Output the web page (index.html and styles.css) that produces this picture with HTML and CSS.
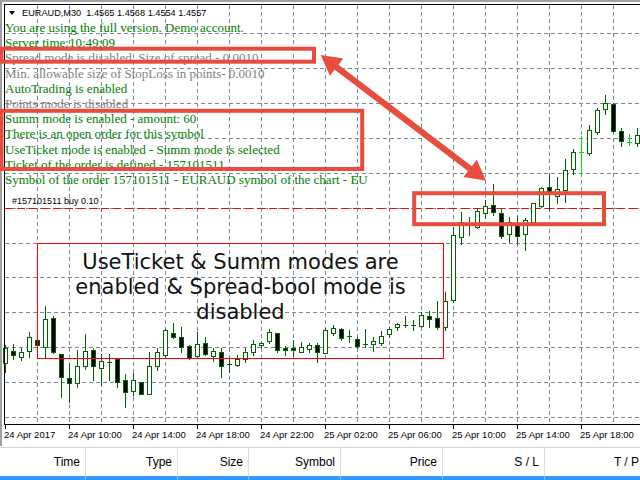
FILE: index.html
```html
<!DOCTYPE html>
<html lang="en">
<head>
    <meta charset="UTF-8">
    <title>EURAUD,M30</title>
    <link rel="stylesheet" href="styles.css">
</head>
<body>
    <div class="chart-window">
        <svg class="chart" width="638" height="427" viewBox="2 2 638 427">
            <g id="grid" class="grid"></g>
            <line class="order-line" x1="5" y1="208.5" x2="640" y2="208.5"/>
            <g id="candles"></g>
            <g class="frame">
                <line x1="4" y1="4.5" x2="640" y2="4.5"/>
                <line x1="4.5" y1="4" x2="4.5" y2="425"/>
                <line x1="4" y1="424.5" x2="640" y2="424.5"/>
            </g>
            <g id="ticks" class="frame"></g>
        </svg>

        <div class="info">
            <div class="chart-title"><span class="caret"></span>EURAUD,M30&nbsp; 1.4565 1.4568 1.4554 1.4557</div>
            <div class="msg on">You are using the full version. Demo account.</div>
            <div class="msg on">Server time:10:49:09</div>
            <div class="msg off">Spread mode is disabled. Size of spread - 0.0010</div>
            <div class="msg off">Min. allowable size of StopLoss in points- 0.0010</div>
            <div class="msg on">AutoTrading is enabled</div>
            <div class="msg off">Points mode is disabled</div>
            <div class="msg on">Summ mode is enabled - amount: 60</div>
            <div class="msg on">There is an open order for this symbol</div>
            <div class="msg on">UseTicket mode is enabled - Summ mode is selected</div>
            <div class="msg on">Ticket of the order is defined - 157101511</div>
            <div class="msg on">Symbol of the order 157101511 - EURAUD symbol of the chart - EU</div>
        </div>

        <div class="order-label">#157101511 buy 0.10</div>

        <div class="note">
            <p>UseTicket &amp; Summ modes are enabled &amp; Spread-bool mode is disabled</p>
        </div>

        <div class="time-axis">
            <span>24 Apr 2017</span>
            <span>24 Apr 10:00</span>
            <span>24 Apr 14:00</span>
            <span>24 Apr 18:00</span>
            <span>24 Apr 22:00</span>
            <span>25 Apr 02:00</span>
            <span>25 Apr 06:00</span>
            <span>25 Apr 10:00</span>
            <span>25 Apr 14:00</span>
            <span>25 Apr 18:00</span>
        </div>
    </div>

    <div class="orders">
        <div class="orders-head">
            <div class="col c-time">Time</div>
            <div class="col c-type">Type</div>
            <div class="col c-size">Size</div>
            <div class="col c-symbol">Symbol</div>
            <div class="col c-price">Price</div>
            <div class="col c-sl">S / L</div>
            <div class="col c-tp">T / P</div>
        </div>
        <div class="orders-row">
            <div class="col c-time"></div>
            <div class="col c-type"></div>
            <div class="col c-size"></div>
            <div class="col c-symbol"></div>
            <div class="col c-price"></div>
            <div class="col c-sl"></div>
            <div class="col c-tp"></div>
        </div>
    </div>

    <!-- marcas de la captura -->
    <svg class="markup" width="640" height="480" viewBox="0 0 640 480">
        <rect x="1.5" y="48.7" width="312.5" height="13"/>
        <rect x="1.5" y="110.8" width="360.7" height="58.2"/>
        <rect x="414.2" y="193.2" width="189.8" height="31"/>
        <line x1="335" y1="66" x2="471" y2="169.5"/>
        <polygon points="320.7,55 343.3,58.4 329.9,75.8"/>
        <polygon points="486,180.5 463.4,177.1 476.8,159.7"/>
    </svg>

    <script>
        const NS = 'http://www.w3.org/2000/svg';

        function add(parent, tag, attrs) {
            const el = document.createElementNS(NS, tag);
            for (const k in attrs) el.setAttribute(k, attrs[k]);
            parent.appendChild(el);
            return el;
        }

        // Rejilla
        const grid = document.getElementById('grid');
        for (let x = 37; x < 640; x += 32) {
            add(grid, 'line', { x1: x + 0.5, y1: 5, x2: x + 0.5, y2: 424 });
        }
        [33, 68, 103, 138, 173, 208, 243, 277, 312, 347, 382, 417].forEach(y => {
            add(grid, 'line', { x1: 5, y1: y + 0.5, x2: 640, y2: y + 0.5 });
        });

        // Marcas del eje de tiempo
        const ticks = document.getElementById('ticks');
        for (let x = 5; x < 640; x += 64) {
            add(ticks, 'line', { x1: x + 0.5, y1: 424, x2: x + 0.5, y2: 429 });
        }

        // Velas M30: [max, cuerpo arriba, cuerpo abajo, min, tipo] en pixeles
        const bars = [
            [345,348,363,372,'u'], [344,351,355,359,'d'], [348,352,357,360,'u'], [332,337,351,357,'u'],
            [338,340,345,347,'d'], [306,319,347,357,'u'], [316,318,352,353,'d'], [354,354,377,397,'d'],
            [364,378,383,402,'d'], [350,366,383,387,'u'], [334,351,366,369,'u'], [348,350,366,380,'d'],
            [354,361,368,385,'u'], [354,362,363,380,'u'], [359,359,382,387,'d'], [374,380,392,407,'d'],
            [373,380,391,395,'u'], [382,382,394,394,'d'], [352,366,394,394,'u'], [348,352,366,370,'u'],
            [329,330,355,357,'u'], [323,333,337,338,'d'], [327,337,347,352,'d'], [345,346,358,359,'d'],
            [332,344,356,358,'u'], [337,343,354,355,'d'], [348,351,356,361,'u'], [348,352,366,377,'d'],
            [357,364,365,372,'d'], [355,359,365,366,'u'], [348,352,359,362,'u'], [340,344,352,355,'u'],
            [342,343,345,347,'u'], [329,332,341,343,'u'], [333,333,350,352,'d'], [346,348,350,355,'d'],
            [340,348,350,356,'d'], [342,347,352,352,'u'], [343,345,349,352,'u'], [343,345,352,362,'d'],
            [328,330,353,353,'u'], [325,328,333,335,'u'], [328,329,338,340,'d'], [330,336,337,342,'d'],
            [337,339,346,348,'d'], [329,344,345,347,'d'], [337,341,344,351,'u'], [331,336,343,345,'u'],
            [327,329,334,337,'u'], [323,324,327,330,'u'], [316,325,326,327,'d'], [320,325,326,330,'d'],
            [312,315,326,327,'u'], [311,316,319,327,'d'], [301,318,327,329,'d'], [292,301,327,330,'u'],
            [227,235,300,302,'u'], [212,222,237,244,'u'], [217,223,224,235,'u'], [209,211,227,228,'u'],
            [200,206,213,218,'u'], [184,205,212,215,'d'], [208,213,236,238,'d'], [217,222,234,242,'u'],
            [216,223,236,244,'d'], [218,220,234,250,'u'], [203,203,222,223,'u'], [187,188,206,207,'u'],
            [174,187,194,210,'d'], [177,189,196,203,'u'], [159,170,190,202,'u'], [149,152,169,174,'u'],
            [136,152,153,175,'x'], [125,130,153,155,'u'], [108,110,132,134,'u'], [95,103,109,114,'u'],
            [103,104,131,132,'d'], [128,131,141,146,'d'], [134,142,143,145,'x'], [128,135,143,146,'u']
        ];

        const candles = document.getElementById('candles');
        bars.forEach((b, i) => {
            const [hi, top, bot, lo, kind] = b;
            const x = 5.5 + i * 8;
            const cls = kind === 'x' ? 'doji' : (kind === 'd' ? 'bear' : 'bull');
            const bar = add(candles, 'g', { class: cls });
            add(bar, 'line', { x1: x, y1: hi, x2: x, y2: lo + 1 });
            if (bot - top < 2) {
                add(bar, 'line', { x1: x - 2.5, y1: top + 0.5, x2: x + 2.5, y2: top + 0.5 });
            } else {
                add(bar, 'rect', { x: x - 2, y: top + 0.5, width: 4, height: bot - top });
            }
        });
    </script>
</body>
</html>
```

FILE: styles.css
```css
* {
    box-sizing: border-box;
    margin: 0;
    padding: 0;
}

body {
    position: relative;
    width: 640px;
    height: 480px;
    overflow: hidden;
    background-color: #fff;
    font-family: 'Liberation Sans', Arial, sans-serif;
    color: #000;
}

/* Ventana del grafico */
.chart-window {
    position: relative;
    height: 446px;
    border-left: 2px solid #a0a0a0;
    border-top: 2px solid #a0a0a0;
}

.chart {
    display: block;
    shape-rendering: crispEdges;
}

.grid line {
    stroke: #778899;
    stroke-width: 1;
    stroke-dasharray: 4 3;
}

.order-line {
    stroke: #ff0000;
    stroke-width: 1;
    stroke-dasharray: 8 4;
}

.frame line {
    stroke: #000;
    stroke-width: 1;
}

.bull line, .bull rect {
    stroke: #006400;
    stroke-width: 1;
    fill: #fff;
}

.bear line, .bear rect {
    stroke: #006400;
    stroke-width: 1;
    fill: #000;
}

.doji line {
    stroke: #00e000;
    stroke-width: 1;
}

.info {
    position: absolute;
    left: 3px;
    top: 4px;
}

.chart-title {
    display: flex;
    align-items: center;
    height: 14px;
    padding-left: 4px;
    font-size: 9.2px;
    line-height: 14px;
}

.caret {
    width: 0;
    height: 0;
    margin-right: 7px;
    border-left: 3px solid transparent;
    border-right: 3px solid transparent;
    border-top: 4px solid #000;
}

.msg {
    font-family: 'Liberation Serif', 'Times New Roman', serif;
    font-size: 13px;
    line-height: 15.2px;
    white-space: nowrap;
}

.msg.on {
    color: #008000;
}

.msg.off {
    color: #808080;
}

.order-label {
    position: absolute;
    left: 10px;
    top: 194px;
    font-size: 9px;
    line-height: 11px;
}

.note {
    position: absolute;
    left: 35px;
    top: 241px;
    width: 407px;
    height: 116px;
    padding-top: 6px;
    border: 1px solid #ff0000;
    display: flex;
    justify-content: center;
}

.note p {
    width: 384px;
    font-family: 'DejaVu Sans', Verdana, sans-serif;
    font-size: 21px;
    line-height: 25px;
    text-align: center;
    color: #111;
}

.time-axis {
    display: flex;
    padding-left: 2px;
    font-size: 9.5px;
    line-height: 11px;
}

.time-axis span {
    flex: none;
    width: 64px;
    white-space: nowrap;
}

/* Terminal - ordenes */
.orders {
    border-top: 1px solid #d6d6d6;
    margin-top: 1px;
}

.orders-head, .orders-row {
    display: flex;
}

.orders-head {
    height: 28px;
    align-items: center;
    font-size: 12px;
}

.orders-row {
    height: 6px;
    background-color: #3399ff;
}

.col {
    flex: none;
    height: 100%;
    padding-right: 5px;
    text-align: right;
    line-height: 28px;
    white-space: nowrap;
    border-right: 1px solid #dcdcdc;
}

.orders-row .col {
    border-right-color: #7fbfff;
}

.c-time { width: 86px; }
.c-type { width: 92px; }
.c-size { width: 71px; }
.c-symbol { width: 92px; }
.c-price { width: 102px; }
.c-sl { width: 102px; }
.c-tp { width: 100px; padding-right: 6px; border-right: none; }

/* Marcas rojas encima de todo */
.markup {
    position: absolute;
    left: 0;
    top: 0;
    pointer-events: none;
}

.markup rect {
    fill: none;
    stroke: #e74c3c;
    stroke-width: 4;
}

.markup line {
    stroke: #e74c3c;
    stroke-width: 6;
}

.markup polygon {
    fill: #e74c3c;
}
```
